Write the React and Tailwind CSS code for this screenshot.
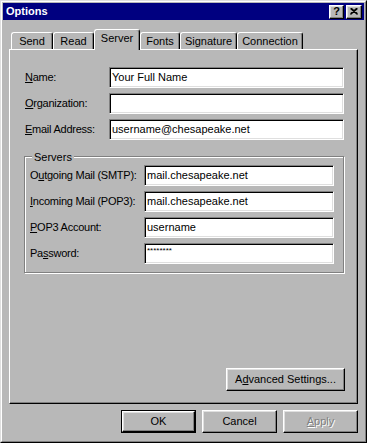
import React from 'react'

const raised = 'border border-t-white border-l-white border-b-black border-r-black shadow-[inset_-1px_-1px_0_#808080,inset_1px_1px_0_#dfdfdf]'
const sunken = 'border border-t-[#808080] border-l-[#808080] border-b-white border-r-white shadow-[inset_1px_1px_0_#000,inset_-1px_-1px_0_#dfdfdf]'

const tabs = [
  { label: 'Send', w: 'w-[42px]' },
  { label: 'Read', w: 'w-[41px]' },
  { label: 'Server', w: 'w-[46px]', active: true },
  { label: 'Fonts', w: 'w-[40px]' },
  { label: 'Signature', w: 'w-[57px]' },
  { label: 'Connection', w: 'w-[66px]' },
]

function Field({ children, password }) {
  return (
    <div className={`flex-1 h-[21px] bg-white flex whitespace-nowrap overflow-hidden pl-[2px] ${password ? 'items-start pt-[3px] text-[8px] leading-none' : 'items-center'} ${sunken}`}>
      {children}
    </div>
  )
}

function Row({ label, labelW, children, password }) {
  return (
    <div className="flex items-center h-[21px]">
      <div className={`${labelW} shrink-0 whitespace-nowrap tracking-[-0.25px]`}>{label}</div>
      <Field password={password}>{children}</Field>
    </div>
  )
}

export default function App() {
  return (
    <div className="w-[367px] h-[443px] bg-[#b8b8b8] border border-t-[#dfdfdf] border-l-[#dfdfdf] border-b-black border-r-black font-['Liberation_Sans',Arial,sans-serif] text-[11px] text-black select-none">
      <div className="h-full border border-t-white border-l-white border-b-[#808080] border-r-[#808080] p-px flex flex-col">
        {/* title bar */}
        <div className="h-[17px] bg-[#000080] flex items-center justify-between pl-[3px] pr-[2px]">
          <span className="text-white font-bold text-[11px]">Options</span>
          <div className="flex gap-[2px]">
            <div className={`w-[15px] h-[14px] bg-[#b8b8b8] flex items-center justify-center font-bold text-[11px] leading-none ${raised}`}>?</div>
            <div className={`w-[16px] h-[14px] bg-[#b8b8b8] flex items-center justify-center ${raised}`}>
              <svg width="8" height="7" viewBox="0 0 8 7">
                <path d="M0.5 0.5 L7.5 6.5 M1.5 0.5 L7.5 5.8 M7.5 0.5 L0.5 6.5 M6.5 0.5 L0.5 5.8" stroke="#000" strokeWidth="1.2" />
              </svg>
            </div>
          </div>
        </div>

        <div className="px-[6px] pt-[9px] flex flex-col">
          {/* tabs */}
          <div className="h-[20px] flex items-end pl-[2px]">
            {tabs.map((t) => (
              <div
                key={t.label}
                className={`${t.w} flex items-center justify-center border-t border-l border-r border-t-white border-l-white border-r-black rounded-t-[3px] shadow-[inset_-1px_0_0_#808080] ${t.active ? 'h-[21px] -mb-px relative z-10 bg-[#b8b8b8] pb-[3px]' : 'h-[17px]'}`}
              >
                {t.label}
              </div>
            ))}
          </div>

          {/* panel */}
          <div className="h-[355px] border border-t-white border-l-white border-b-black border-r-black shadow-[inset_-1px_-1px_0_#808080] flex flex-col pt-[17px] pl-[15px] pr-[13px] pb-[12px]">
            <div className="flex flex-col gap-[5px]">
              <Row labelW="w-[84px]" label={<><u>N</u>ame:</>}>Your Full Name</Row>
              <Row labelW="w-[84px]" label={<><u>O</u>rganization:</>}></Row>
              <Row labelW="w-[84px]" label={<><u>E</u>mail Address:</>}>username@chesapeake.net</Row>
            </div>

            <div className="relative mt-[16px] -ml-px border border-[#808080] shadow-[inset_1px_1px_0_#fff,1px_1px_0_#fff] pt-[8px] pl-[5px] pr-[9px] pb-[8px] flex flex-col gap-[5px]">
              <span className="absolute left-[7px] -top-[8px] px-[2px] bg-[#b8b8b8]">Servers</span>
              <Row labelW="w-[114px]" label={<>O<u>u</u>tgoing Mail (SMTP):</>}>mail.chesapeake.net</Row>
              <Row labelW="w-[114px]" label={<><u>I</u>ncoming Mail (POP3):</>}>mail.chesapeake.net</Row>
              <Row labelW="w-[114px]" label={<><u>P</u>OP3 Account:</>}>username</Row>
              <Row labelW="w-[114px]" label={<>Pa<u>s</u>sword:</>} password>********</Row>
            </div>

            <div className="flex-1" />
            <div className="flex justify-end -mr-px">
              <div className={`w-[119px] h-[23px] flex items-center justify-center ${raised}`}>
                A<u>d</u>vanced Settings...
              </div>
            </div>
          </div>

          {/* dialog buttons */}
          <div className="flex justify-end gap-[6px] mt-[6px]">
            <div className="w-[75px] h-[23px] border border-black">
              <div className={`w-full h-full flex items-center justify-center ${raised}`}>OK</div>
            </div>
            <div className={`w-[75px] h-[23px] flex items-center justify-center ${raised}`}>Cancel</div>
            <div className={`w-[75px] h-[23px] flex items-center justify-center text-[#808080] [text-shadow:1px_1px_0_#fff] ${raised}`}>
              <span><u>A</u>pply</span>
            </div>
          </div>
        </div>
      </div>
    </div>
  )
}
